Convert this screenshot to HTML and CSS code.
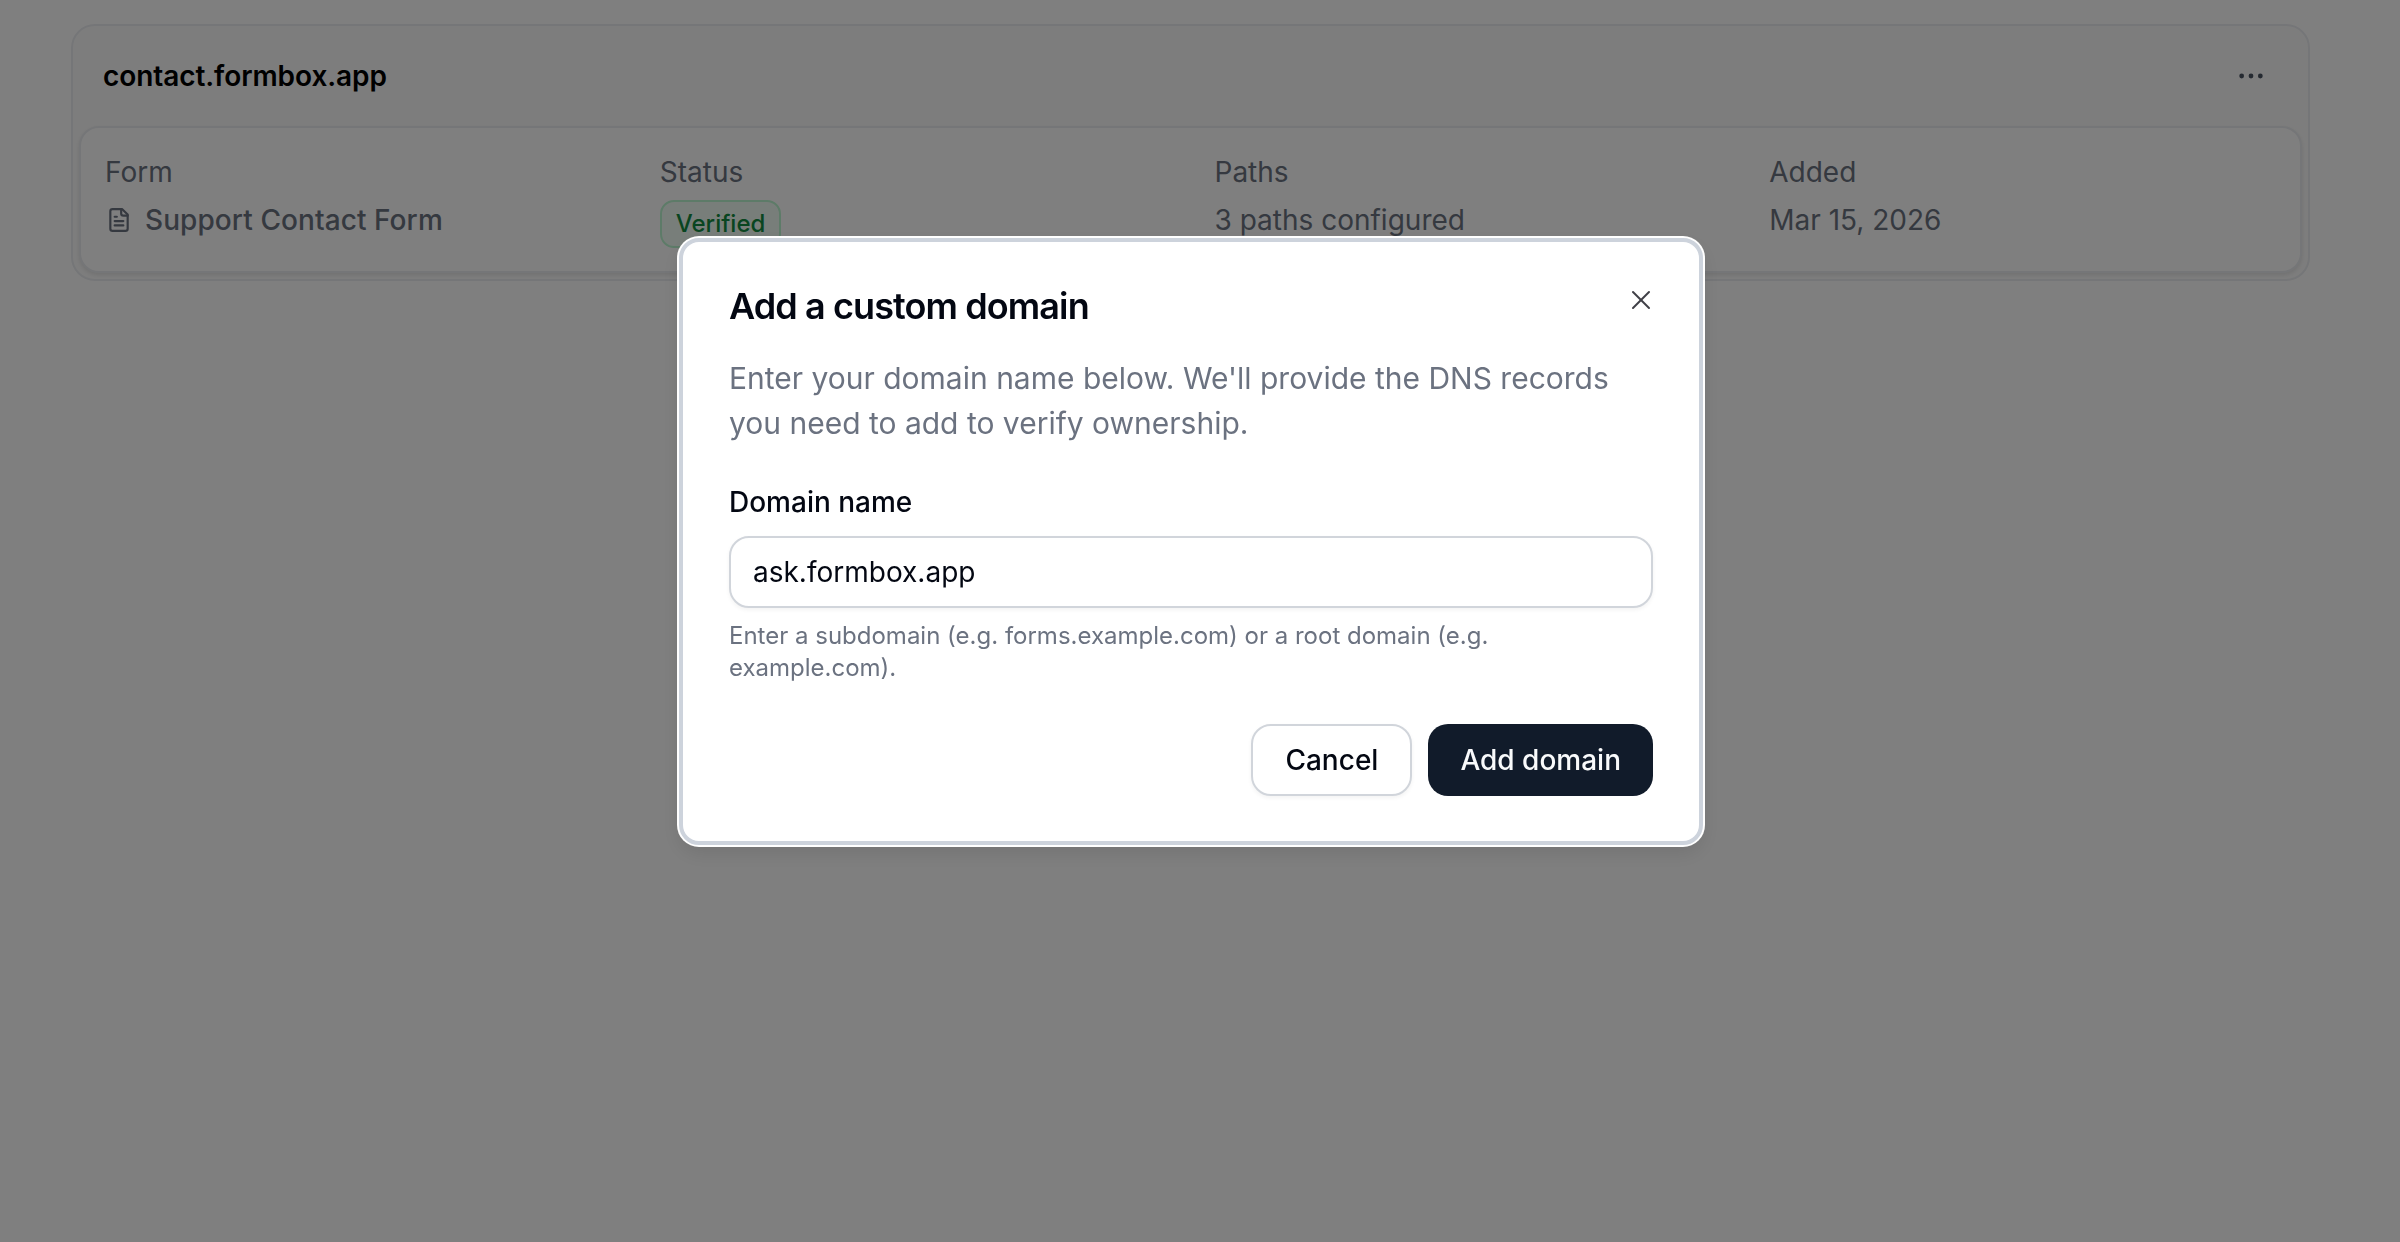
FILE: index.html
```html
<!DOCTYPE html>
<html lang="en">
<head>
<meta charset="utf-8">
<title>Custom domains</title>
<link rel="stylesheet" href="styles.css">
</head>
<body>
<main class="page">
  <section class="card">
    <header class="card-head">
      <h2 class="card-title">contact.formbox.app</h2>
      <button class="more" type="button" aria-label="More">
        <svg width="32" height="32" viewBox="0 0 32 32" fill="currentColor"><circle cx="6.670" cy="16" r="2.400"/><circle cx="16" cy="16" r="2.400"/><circle cx="25.330" cy="16" r="2.400"/></svg>
      </button>
    </header>
    <div class="details">
      <div class="col">
        <div class="label">Form</div>
        <div class="value value-icon">
          <svg class="doc" width="26" height="26" viewBox="0 0 24 24" fill="none" stroke="currentColor" stroke-width="2" stroke-linecap="round" stroke-linejoin="round"><path d="M15 2H6a2 2 0 0 0-2 2v16a2 2 0 0 0 2 2h12a2 2 0 0 0 2-2V7Z"/><path d="M14 2v4a2 2 0 0 0 2 2h4"/><path d="M10 9H8"/><path d="M16 13H8"/><path d="M16 17H8"/></svg>
          <span>Support Contact Form</span>
        </div>
      </div>
      <div class="col">
        <div class="label">Status</div>
        <div class="value"><span class="badge">Verified</span></div>
      </div>
      <div class="col">
        <div class="label">Paths</div>
        <div class="value">3 paths configured</div>
      </div>
      <div class="col">
        <div class="label">Added</div>
        <div class="value">Mar 15, 2026</div>
      </div>
    </div>
  </section>
</main>
<div class="overlay">
  <div class="modal" role="dialog">
    <button class="close" type="button" aria-label="Close">
      <svg width="32" height="32" viewBox="0 0 24 24" fill="none" stroke="currentColor" stroke-width="1.500" stroke-linecap="round" stroke-linejoin="round"><path d="M18 6 6 18"/><path d="m6 6 12 12"/></svg>
    </button>
    <h1 class="modal-title">Add a custom domain</h1>
    <p class="modal-desc">Enter your domain name below. We'll provide the DNS records you need to add to verify ownership.</p>
    <label class="field-label" for="domain">Domain name</label>
    <input class="field-input" id="domain" type="text" value="ask.formbox.app">
    <p class="field-hint">Enter a subdomain (e.g. forms.example.com) or a root domain (e.g. example.com).</p>
    <div class="actions">
      <button class="btn btn-outline" type="button">Cancel</button>
      <button class="btn btn-primary" type="button">Add domain</button>
    </div>
  </div>
</div>
</body>
</html>
```
FILE: styles.css
```css
* { box-sizing: border-box; }
html, body { margin: 0; height: 100%; }
body { background: #fff; font-family: Inter, "Liberation Sans", sans-serif; color: #000; overflow: hidden; }
h1, h2, p { margin: 0; }
button { font-family: inherit; }

.page { padding: 24px 90px 0 71px; }
.card { border: 2px solid #ebedf0; border-radius: 24px; background: #fbfbfb; padding: 0 6px 6px; height: 257px; }
.card-head { display: flex; align-items: center; justify-content: space-between; height: 100px; padding: 0 35px 0 24px; }
.card-title { font-size: 28px; line-height: 40px; font-weight: 600; letter-spacing: -.08px; color: #000; }
.more { display: flex; padding: 0; border: 0; background: none; color: #4b5563; }
.details { display: grid; grid-template-columns: repeat(4, 1fr); gap: 48px; height: 147px; padding: 24px 24px 0; background: #fff; border: 2px solid #ebedf0; border-radius: 20px; box-shadow: 0 2px 4px rgba(0,0,0,.1); }
.label { font-size: 28px; line-height: 40px; color: #6b7280; }
.value { margin-top: 8px; font-size: 28px; line-height: 40px; color: #6b7280; }
.value-icon { display: flex; align-items: center; gap: 13px; font-weight: 500; letter-spacing: .08px; }
.doc { flex: none; margin-left: 1px; color: #6b7280; }
.badge { display: inline-block; padding: 2px 14px; font-size: 24px; line-height: 40px; font-weight: 500; color: #128a41; background: #f0fdf4; border: 2px solid #bbf7d0; border-radius: 14px; }

.overlay { position: fixed; inset: 0; background: rgba(0,0,0,.5); display: flex; justify-content: center; align-items: flex-start; padding: 238px 18px 0 0; }
.modal { position: relative; width: 1024px; height: 607px; padding: 40px 46px 0; background: #fff; border: 4px solid #cdd3dc; border-radius: 20px; box-shadow: 0 0 0 2px #fff, 0 8px 20px rgba(0,0,0,.1); }
.close { position: absolute; top: 42px; right: 42px; display: flex; padding: 0; border: 0; background: none; color: #3f3f46; }
.modal-title { font-size: 36px; line-height: 48px; font-weight: 600; letter-spacing: -.9px; color: #030712; }
.modal-desc { margin-top: 26px; font-size: 30px; line-height: 45px; color: #6b7280; }
.field-label { display: block; margin-top: 36px; font-size: 28px; line-height: 40px; font-weight: 500; color: #030712; }
.field-input { display: block; width: 100%; height: 72px; margin-top: 14px; padding: 0 22px; font: 400 28px Inter, sans-serif; color: #030712; border: 2px solid #d1d5db; border-radius: 20px; background: #fff; box-shadow: 0 2px 4px rgba(0,0,0,.05); }
.field-hint { margin-top: 12px; font-size: 24px; line-height: 32px; color: #6b7280; }
.actions { display: flex; justify-content: flex-end; gap: 16px; margin-top: 40px; }
.btn { height: 72px; padding: 0 32px; font-size: 28px; font-weight: 500; border-radius: 20px; }
.btn-outline { color: #030712; background: #fff; border: 2px solid #d1d5db; box-shadow: 0 2px 4px rgba(0,0,0,.05); }
.btn-primary { color: #f9fafb; background: #111b2a; border: 0; }
```
